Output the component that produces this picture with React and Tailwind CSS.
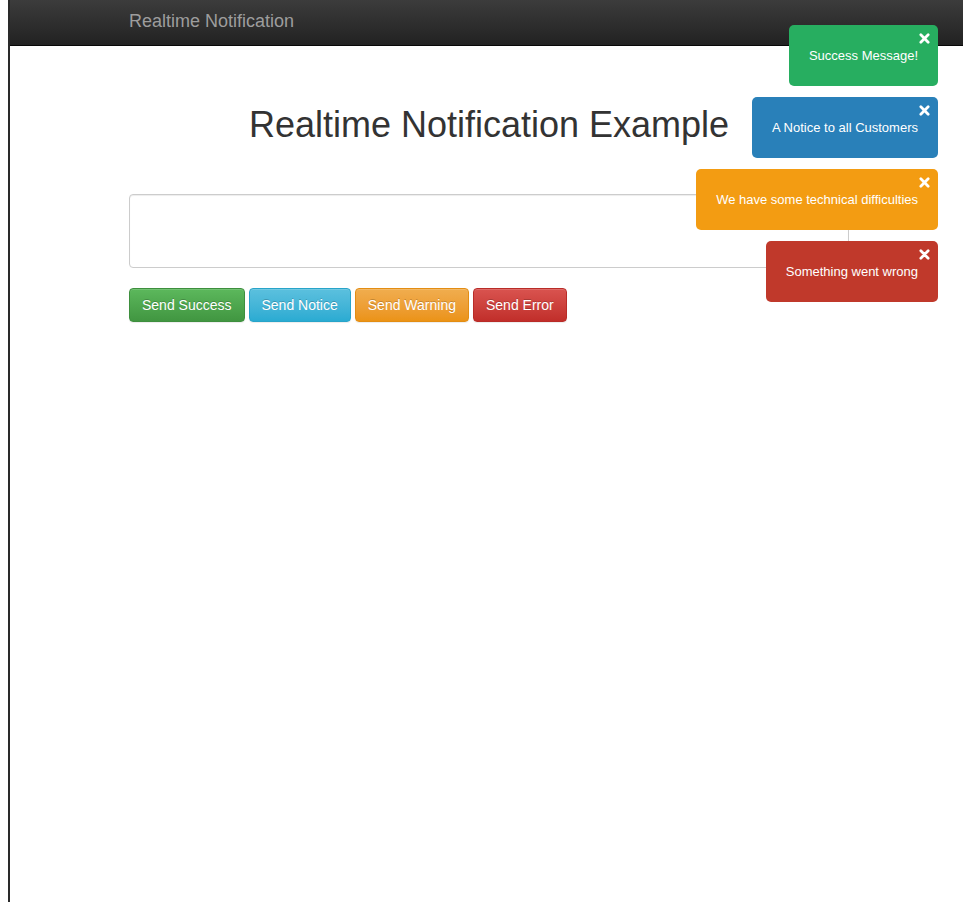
import React from 'react';

const buttons = [
    { label: 'Send Success', cls: 'bg-gradient-to-b from-[#5cb85c] to-[#419641] border-[#3e8f3e]' },
    { label: 'Send Notice', cls: 'bg-gradient-to-b from-[#5bc0de] to-[#2aabd2] border-[#28a4c9]' },
    { label: 'Send Warning', cls: 'bg-gradient-to-b from-[#f0ad4e] to-[#eb9316] border-[#e38d13]' },
    { label: 'Send Error', cls: 'bg-gradient-to-b from-[#d9534f] to-[#c12e2a] border-[#b92c28]' },
];

const toasts = [
    { text: 'Success Message!', cls: 'bg-[#27ae60]' },
    { text: 'A Notice to all Customers', cls: 'bg-[#2980b9]' },
    { text: 'We have some technical difficulties', cls: 'bg-[#f39c12]' },
    { text: 'Something went wrong', cls: 'bg-[#c0392b]' },
];

const CloseIcon = () => (
    <svg width="11" height="11" viewBox="0 0 12 12" className="absolute top-[8px] right-[8px]">
        <path d="M2 2 L10 10 M10 2 L2 10" stroke="white" strokeWidth="3" strokeLinecap="round" />
    </svg>
);

export default function App() {
    return (
        <div className="relative min-h-[902px] w-[972px] bg-white font-['Liberation_Sans',Arial,sans-serif] text-[#333]">
            <div className="ml-[8px] w-[955px] min-h-[902px] border-l-2 border-[#2a2a2a]">
                <nav className="h-[46px] pb-[2px] bg-gradient-to-b from-[#3c3c3c] to-[#222] border-b border-[#080808] flex items-center pl-[119px]">
                    <span className="text-[18px] text-[#9d9d9d]">Realtime Notification</span>
                </nav>

                <div className="w-[720px] ml-[119px]">
                    <h1 className="mt-[59px] text-[36px] leading-[40px] text-center text-[#333]">
                        Realtime Notification Example
                    </h1>

                    <textarea className="mt-[49px] block w-[720px] h-[74px] border border-[#ccc] rounded-[4px] shadow-[inset_0_1px_1px_rgba(0,0,0,0.075)] resize-none outline-none" />

                    <div className="mt-[20px] flex gap-[4px]">
                        {buttons.map((b) => (
                            <button
                                key={b.label}
                                className={`${b.cls} h-[34px] px-[12px] border rounded-[4px] text-[14px] text-white [text-shadow:0_-1px_0_rgba(0,0,0,0.2)] shadow-[inset_0_1px_0_rgba(255,255,255,0.15),0_1px_1px_rgba(0,0,0,0.075)]`}
                            >
                                {b.label}
                            </button>
                        ))}
                    </div>
                </div>
            </div>

            <div className="absolute top-[25px] right-[34px] flex flex-col items-end gap-[11px]">
                {toasts.map((t) => (
                    <div
                        key={t.text}
                        className={`${t.cls} relative h-[61px] px-[20px] rounded-[5px] flex items-center text-[13px] text-white`}
                    >
                        {t.text}
                        <CloseIcon />
                    </div>
                ))}
            </div>
        </div>
    );
}
